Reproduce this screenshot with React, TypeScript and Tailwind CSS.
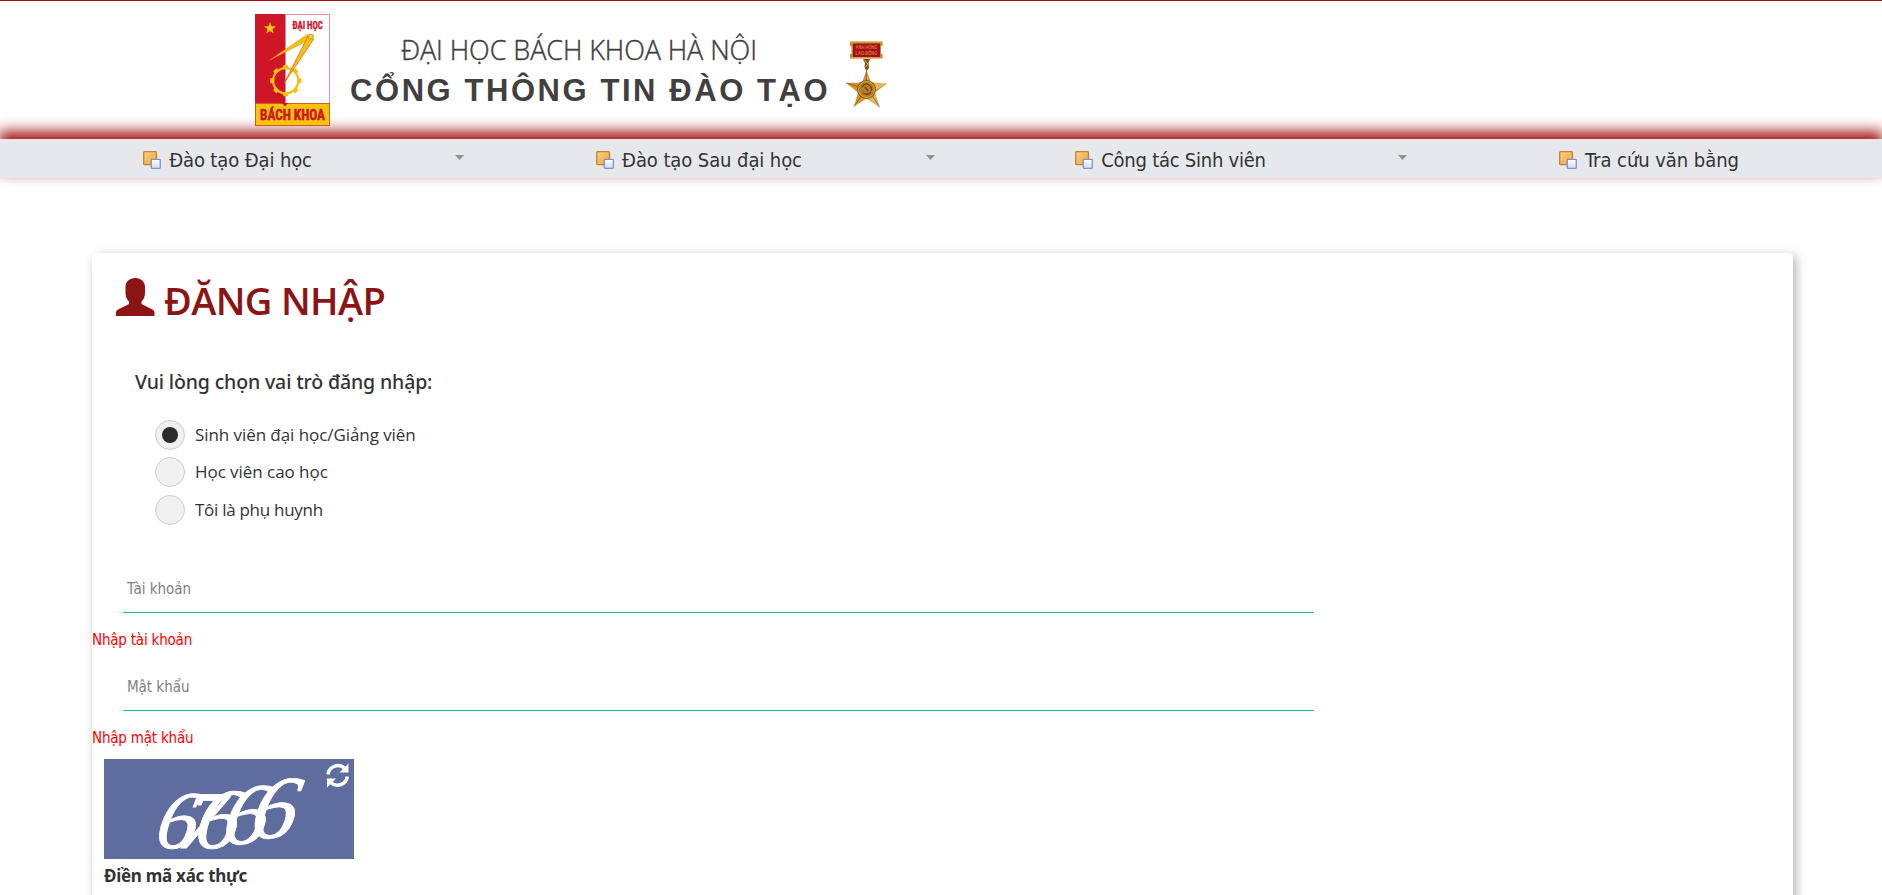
import { useState } from 'react'

const tahoma = "font-['DejaVu_Sans_Condensed','DejaVu_Sans',sans-serif]"
const segoe = "font-['Open_Sans','Noto_Sans',sans-serif]"

function Crest() {
  const teeth = [0, 45, 90, 135, 180, 225, 270, 315]
  return (
    <svg width="75" height="112" viewBox="0 0 75 112" className="block shrink-0">
      <rect width="75" height="112" fill="#fff" />
      <rect width="30.5" height="90" fill="#cf1627" />
      <path d="M30 .5H74.5V90" fill="none" stroke="#e8909a" strokeWidth="1" />
      <polygon points="15,8 16.5,12.3 21.1,12.4 17.4,15.1 18.8,19.5 15,16.9 11.2,19.5 12.6,15.1 8.9,12.4 13.5,12.3" fill="#f7c812" />
      <g fill="#f3c00f">
        {teeth.map((a) => (
          <rect key={a} x="28.2" y="51.2" width="5" height="4" transform={`rotate(${a} 30.7 66.7)`} />
        ))}
      </g>
      <circle cx="30.7" cy="66.7" r="12.6" fill="none" stroke="#f3c00f" strokeWidth="2.2" />
      <path d="M14.5 46.2 L52.5 20.3 L56 25 L50 28 Z" fill="#f3c00f" stroke="#e58a1c" strokeWidth=".5" />
      <path d="M29.3 69 L52.8 22.5 L58.5 25.5 Z" fill="#f3c00f" stroke="#dd5a1e" strokeWidth=".7" />
      <circle cx="56" cy="22.7" r="2.4" fill="#f8d35a" stroke="#e8a012" strokeWidth="1.2" />
      <rect x=".5" y="89.5" width="74" height="22" fill="#f5c20d" stroke="#dd5722" strokeWidth="1" />
      <path d="M27 89 L30 92.5 L33 89Z" fill="#cf1627" />
      <g fill="#cf1627" fontWeight="700" fontFamily="'Liberation Sans Narrow','Roboto Condensed','Liberation Sans',sans-serif">
        <text x="37.4" y="15.1" fontSize="10" textLength="30.4" lengthAdjust="spacingAndGlyphs" stroke="#cf1627" strokeWidth=".3">ĐẠI HỌC</text>
        <text x="5" y="106" fontSize="15" textLength="65" lengthAdjust="spacingAndGlyphs" stroke="#cf1627" strokeWidth=".5">BÁCH KHOA</text>
      </g>
    </svg>
  )
}

function Medal() {
  return (
    <svg width="41" height="66" viewBox="0 0 41 66" className="block shrink-0">
      <path d="M4 .5H36.500V5H35V13H36.500V17.500H4V13H5.500V5H4Z" fill="#b98a34" />
      <rect x="7" y="2.500" width="27" height="13.500" fill="#a80f14" />
      <g fill="#cc7d45" fontSize="5" fontWeight="700" fontFamily="'Liberation Sans',sans-serif">
        <text x="9.500" y="8.400" textLength="22" lengthAdjust="spacingAndGlyphs">ANH HÙNG</text>
        <text x="9.500" y="14" textLength="22" lengthAdjust="spacingAndGlyphs">LAO ĐỘNG</text>
      </g>
      <path d="M4 1H36.500M5 17H36" stroke="#e0b95c" strokeWidth="1.200" />
      <path d="M17 18H24L22.500 22L23 27L20.500 30L18.500 26L19 22Z" fill="#7a4f16" />
      <path d="M19 19.500L22 23L19.500 26" stroke="#e3b65a" strokeWidth="1" fill="none" />
      <polygon points="20.500,29 25,41.500 41,42.500 29,51.500 33.500,66 20.500,57.500 8,65.500 12,51.500 0,42 16,41.500" fill="#cf962f" />
      <path d="M20.500 29L23 42L41 42.500L28 50L33.500 66L20.500 56Z" fill="#efd08a" opacity=".6" />
      <path d="M20.500 29V44M0 42L18 47M8 65.500L18 51M33.500 66L24 51" stroke="#8a5a18" strokeWidth=".8" />
      <circle cx="20.500" cy="48.500" r="9.500" fill="#8a5a16" />
      <circle cx="20.500" cy="48.500" r="8" fill="#b67f26" stroke="#d9a848" strokeWidth="1" />
      <path d="M16 46q3-5 7-2t2 6M17 52q5 3 8-1M19 46l3 4" stroke="#6b420f" strokeWidth="1.300" fill="none" />
    </svg>
  )
}

function WindowsIcon() {
  return (
    <svg width="18" height="18" viewBox="0 0 18 18" className="mr-[8px] block shrink-0">
      <defs>
        <linearGradient id="amber" x1="0" y1="0" x2="1" y2="1">
          <stop offset="0" stopColor="#f9d27c" />
          <stop offset="1" stopColor="#e9a545" />
        </linearGradient>
        <linearGradient id="ice" x1="0" y1="0" x2="0" y2="1">
          <stop offset="0" stopColor="#ffffff" />
          <stop offset="1" stopColor="#cfdcf2" />
        </linearGradient>
      </defs>
      <rect x=".7" y=".7" width="12.800" height="13" rx="1" fill="url(#amber)" stroke="#c4803c" strokeWidth="1.300" />
      <rect x="8.300" y="8.300" width="9" height="9" rx=".8" fill="url(#ice)" stroke="#8492c2" strokeWidth="1.300" />
    </svg>
  )
}

const menu = [
  { label: 'Đào tạo Đại học', arrow: true, cls: 'w-[472px]', tr: 'tracking-[-0.12px]' },
  { label: 'Đào tạo Sau đại học', arrow: true, cls: 'w-[471px]', tr: 'tracking-[-0.09px]' },
  { label: 'Công tác Sinh viên', arrow: true, cls: 'w-[472px]', tr: 'tracking-[-0.24px]' },
  { label: 'Tra cứu văn bằng', arrow: false, cls: 'flex-1 pl-px', tr: 'tracking-[-0.05px]' },
]

const roles = [
  { label: 'Sinh viên đại học/Giảng viên', cls: '', tr: 'tracking-[-0.07px]' },
  { label: 'Học viên cao học', cls: 'mt-[7px]', tr: 'tracking-[-0.05px]' },
  { label: 'Tôi là phụ huynh', cls: 'mt-[8px]', tr: 'tracking-[-0.28px]' },
]

const digits = [
  { d: '6', x: 49, y: 0, size: 82 },
  { d: '7', x: 72, y: 0, size: 82 },
  { d: '6', x: 88, y: 0, size: 86 },
  { d: '6', x: 115, y: -4, size: 88 },
  { d: '6', x: 142, y: -10, size: 90 },
]

function Field({ placeholder, error, type }: { placeholder: string; error: string; type: string }) {
  return (
    <div className="h-[98px]">
      <input
        type={type}
        placeholder={placeholder}
        className="ml-[31px] block h-[48px] w-[1191px] border-b border-[#1abc9c] bg-transparent px-1 text-[15px] tracking-[-0.03px] outline-none placeholder:text-[#808080]"
      />
      <div className="mt-[17px] text-[15px] leading-5 tracking-[-0.2px] text-[#ff0000]">{error}</div>
    </div>
  )
}

function Captcha() {
  return (
    <svg width="250" height="100" viewBox="0 0 250 100" className="block">
      <rect width="250" height="100" fill="#5f6c9e" />
      <text transform="translate(0 89) skewX(-12)" fill="#fff" stroke="#fff" strokeWidth=".8" fontStyle="italic" fontFamily="'Liberation Serif',serif">
        {digits.map((g) => (
          <tspan key={g.x} x={g.x} y={g.y} fontSize={g.size}>
            {g.d}
          </tspan>
        ))}
      </text>
      <g fill="none" stroke="#fff" strokeWidth="3.500">
        <path d="M224 15.500A9.800 9.800 0 0 1 241.500 10.500" />
        <path d="M243.300 17.500A9.800 9.800 0 0 1 226 22.500" />
      </g>
      <path d="M244.500 4.500V13.500H235.500Z" fill="#fff" />
      <path d="M223 28.500V19.500H232Z" fill="#fff" />
    </svg>
  )
}

export default function App() {
  const [role, setRole] = useState(0)
  return (
    <div className="h-[895px] overflow-hidden bg-white text-[#333]">
      <header className="relative z-10 flex h-[139px] border-t border-[#a01212] pl-[255px] pt-[13px]">
        <Crest />
        <div className="ml-[20px] w-[495.5px] pt-[15px] text-[#404040]">
          <div className="pl-[51px] font-['Open_Sans',sans-serif] text-[27px] leading-[42px] font-light tracking-[-0.08px] whitespace-nowrap [-webkit-text-stroke:0.4px_#404040]">
            ĐẠI HỌC BÁCH KHOA HÀ NỘI
          </div>
          <div className="font-['Liberation_Sans',sans-serif] text-[31px] leading-[39px] font-bold tracking-[2.57px] whitespace-nowrap">
            CỔNG THÔNG TIN ĐÀO TẠO
          </div>
        </div>
        <div className="pt-[27px]">
          <Medal />
        </div>
      </header>

      <nav className={`${tahoma} flex h-[39px] bg-[#e7e8ec] text-[20px] shadow-[0_-7px_13px_1px_rgba(153,0,0,0.9)]`}>
        {menu.map((m) => (
          <div key={m.label} className={`${m.cls} flex items-center pt-[2px]`}>
            <a className="flex flex-1 items-center justify-center whitespace-nowrap">
              <WindowsIcon />
              <span className={`${m.tr} leading-6`}>{m.label}</span>
            </a>
            {m.arrow && (
              <span className="w-[17px] pb-1">
                <svg width="9" height="5" viewBox="0 0 9 5" className="block">
                  <path d="M0 0H9L4.500 5Z" fill="#8f9094" />
                </svg>
              </span>
            )}
          </div>
        ))}
      </nav>

      <main className="mt-[75px] mr-[89px] ml-[92px] h-[700px] rounded-[4px] bg-white shadow-[3px_3px_11px_rgba(0,0,0,0.3)]">
        <h1 className={`${segoe} flex pt-[19px] pl-[24px] text-[38px] leading-[56px] font-semibold tracking-[-0.65px] text-[#8b1414]`}>
          <svg width="39" height="38" viewBox="0 0 39 38" className="mt-[6px] mr-[9px] block shrink-0" fill="#8b1414">
            <path d="M19.300 0C25 0 29 3.600 29 9V15C29 19.500 27 22.300 25.500 23.500V26L36.500 31.500Q38.500 32.700 38.500 34.500V38H0V34.500Q0 32.700 2 31.500L13 26V23.500C11.500 22.300 9.500 19.500 9.500 15V9C9.500 3.600 13.500 0 19.300 0Z" />
          </svg>
          ĐĂNG NHẬP
        </h1>

        <div className="mt-[39px] ml-[43px] font-['Noto_Sans',sans-serif] text-[19.5px] leading-[30px] font-medium tracking-[-0.14px]">
          Vui lòng chọn vai trò đăng nhập:
        </div>

        <div className="mt-[23px] ml-[63px] flex flex-col">
          {roles.map((r, i) => (
            <label key={r.label} className={`${segoe} ${r.cls} flex h-[30px] cursor-pointer items-center gap-[10px] text-[17px]`} onClick={() => setRole(i)}>
              <span className="flex size-[30px] items-center justify-center rounded-full border border-[#cccccc] bg-[#f0f0f0]">
                {role === i && <span className="size-[16px] rounded-full bg-[#2b2b2b]" />}
              </span>
              <span className={r.tr}>{r.label}</span>
            </label>
          ))}
        </div>

        <div className={`${tahoma} mt-[40px]`}>
          <Field type="text" placeholder="Tài khoản" error="Nhập tài khoản" />
          <Field type="password" placeholder="Mật khẩu" error="Nhập mật khẩu" />
        </div>

        <div className="-mt-[2px] ml-[12px]">
          <Captcha />
          <div className="mt-[5px] font-['Noto_Sans',sans-serif] text-[17px] leading-6 font-bold tracking-[-0.28px]">Điền mã xác thực</div>
        </div>
      </main>
    </div>
  )
}
